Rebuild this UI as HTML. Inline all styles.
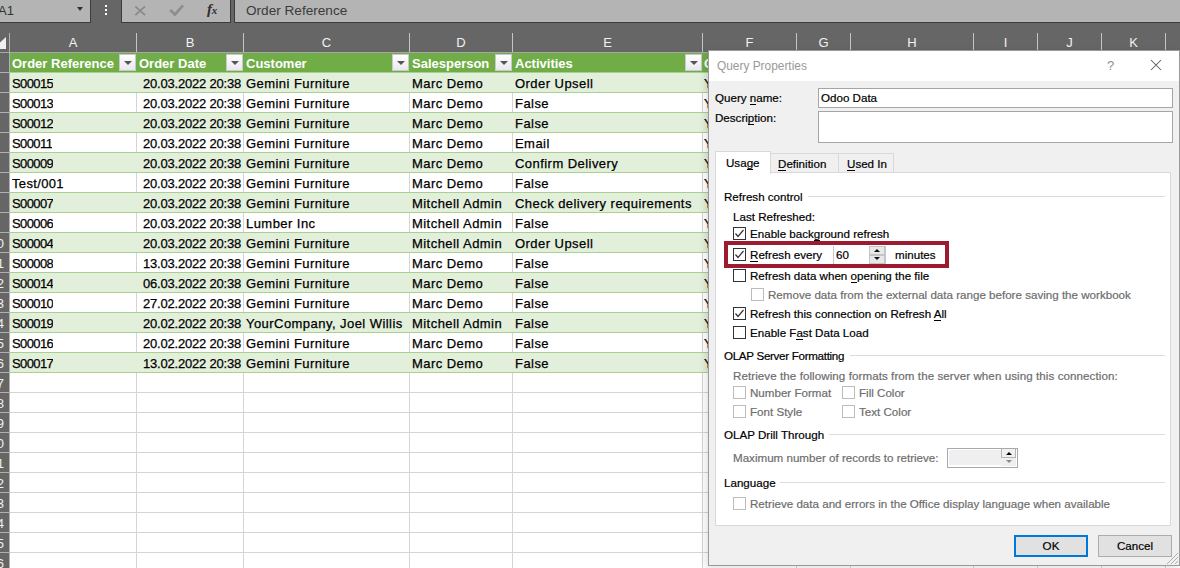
<!DOCTYPE html><html><head><meta charset="utf-8"><style>
*{margin:0;padding:0;box-sizing:border-box}
html,body{width:1180px;height:568px;overflow:hidden;background:#fff;font-family:"Liberation Sans",sans-serif}
.a{position:absolute}
#top{left:0;top:0;width:1180px;height:53px;background:#666}
.box{background:#b4b4b4;border-bottom:1px solid #3c3c3c}
.ch{color:#f2f2f2;font-size:13px;text-align:center;top:34px;height:18px;line-height:18px}
.cs{top:33px;width:1px;height:19px;background:#c4c4c4}
.rh{left:0;width:9px;background:#666}
.cell{font-size:13px;letter-spacing:0.45px;color:#000;-webkit-text-stroke:0.25px #000;white-space:nowrap;overflow:hidden}
.hd{font-size:13px;color:#fff;font-weight:bold;white-space:nowrap}
.fb{width:17px;height:17px;background:linear-gradient(#fff,#e8e8f0);border:1px solid #c9c9c9}
.fb:after{content:"";position:absolute;left:4px;top:6px;border-left:4px solid transparent;border-right:4px solid transparent;border-top:4px solid #555}
.dlg{left:708px;top:50px;width:472px;height:516px;background:#f0f0f0;border:1px solid #9a9a9a;box-shadow:-2px 2px 7px rgba(0,0,0,0.13)}
.t{font-size:11.6px;color:#000;white-space:nowrap;-webkit-text-stroke:0.2px currentColor}
.g{color:#6d6d6d}
.cb{width:13px;height:13px;border:1px solid #333;background:#fff}
.cbd{border-color:#bcbcbc}
.ln{height:1px;background:#dcdcdc}
u{text-decoration:none;border-bottom:1px solid #000}
</style></head><body>

<div class="a" id="top"></div>
<div class="a box" style="left:0;top:0;width:91px;height:23px;border-right:1px solid #3c3c3c"></div>
<div class="a" style="left:-2px;top:3px;font-size:13px;color:#333">A1</div>
<div class="a" style="left:77px;top:7px;border-left:3.5px solid transparent;border-right:3.5px solid transparent;border-top:4px solid #333"></div>
<div class="a" style="left:105px;top:5px;width:2px;height:2px;background:#fff"></div>
<div class="a" style="left:105px;top:9px;width:2px;height:2px;background:#fff"></div>
<div class="a" style="left:105px;top:13px;width:2px;height:2px;background:#fff"></div>
<div class="a box" style="left:121px;top:0;width:110px;height:23px;border-left:1px solid #3c3c3c;border-right:1px solid #3c3c3c"></div>
<svg class="a" style="left:133px;top:4px" width="14" height="14"><path d="M2.3 2.3L12 11.2M12 2.3L2.3 11.2" stroke="#8a8a8a" stroke-width="1.8"/></svg>
<svg class="a" style="left:168px;top:3px" width="17" height="15"><path d="M2.2 7L7 11.5L15 2.3" stroke="#8e8e8e" stroke-width="2.7" fill="none"/></svg>
<div class="a" style="left:207px;top:1px;font-family:'Liberation Serif',serif;font-style:italic;font-weight:bold;font-size:15px;color:#2e2e2e;letter-spacing:-0.3px">f<span style="font-size:11px">x</span></div>
<div class="a box" style="left:234px;top:0;width:946px;height:23px;border-left:1px solid #3c3c3c"></div>
<div class="a" style="left:246px;top:3px;font-size:13.6px;color:#3b3b3b">Order Reference</div>
<svg class="a" style="left:0;top:33px" width="9" height="18"><path d="M-7 16L6 16L6 4Z" fill="#f0f0f0"/></svg>
<div class="a ch" style="left:10px;width:126px">A</div>
<div class="a cs" style="left:136px"></div>
<div class="a ch" style="left:137px;width:106px">B</div>
<div class="a cs" style="left:243px"></div>
<div class="a ch" style="left:244px;width:165px">C</div>
<div class="a cs" style="left:409px"></div>
<div class="a ch" style="left:410px;width:102px">D</div>
<div class="a cs" style="left:512px"></div>
<div class="a ch" style="left:513px;width:189px">E</div>
<div class="a cs" style="left:702px"></div>
<div class="a ch" style="left:703px;width:93px">F</div>
<div class="a cs" style="left:796px"></div>
<div class="a ch" style="left:797px;width:53px">G</div>
<div class="a cs" style="left:850px"></div>
<div class="a ch" style="left:851px;width:122px">H</div>
<div class="a cs" style="left:973px"></div>
<div class="a ch" style="left:974px;width:63px">I</div>
<div class="a cs" style="left:1037px"></div>
<div class="a ch" style="left:1038px;width:63px">J</div>
<div class="a cs" style="left:1101px"></div>
<div class="a ch" style="left:1102px;width:63px">K</div>
<div class="a cs" style="left:1165px"></div>
<div class="a ch" style="left:1166px;width:63px">L</div>
<div class="a cs" style="left:1229px"></div>
<div class="a" style="left:0;top:52px;width:1180px;height:1px;background:#a8a8ac"></div>
<div class="a rh" style="top:53px;height:515px"></div>
<div class="a" style="left:9px;top:33px;width:1px;height:535px;background:#b0b0b0"></div>
<div class="a" style="left:0;top:72px;width:9px;height:1px;background:#b0b0b0"></div>
<div class="a" style="left:0;top:92px;width:9px;height:1px;background:#b0b0b0"></div>
<div class="a" style="left:0;top:112px;width:9px;height:1px;background:#b0b0b0"></div>
<div class="a" style="left:0;top:132px;width:9px;height:1px;background:#b0b0b0"></div>
<div class="a" style="left:0;top:152px;width:9px;height:1px;background:#b0b0b0"></div>
<div class="a" style="left:0;top:172px;width:9px;height:1px;background:#b0b0b0"></div>
<div class="a" style="left:0;top:192px;width:9px;height:1px;background:#b0b0b0"></div>
<div class="a" style="left:0;top:212px;width:9px;height:1px;background:#b0b0b0"></div>
<div class="a" style="left:0;top:232px;width:9px;height:1px;background:#b0b0b0"></div>
<div class="a" style="left:0;top:252px;width:9px;height:1px;background:#b0b0b0"></div>
<div class="a" style="left:-8px;top:236px;font-size:13px;color:#f0f0f0;width:12px;text-align:right">0</div>
<div class="a" style="left:0;top:272px;width:9px;height:1px;background:#b0b0b0"></div>
<div class="a" style="left:-8px;top:256px;font-size:13px;color:#f0f0f0;width:12px;text-align:right">1</div>
<div class="a" style="left:0;top:292px;width:9px;height:1px;background:#b0b0b0"></div>
<div class="a" style="left:-8px;top:276px;font-size:13px;color:#f0f0f0;width:12px;text-align:right">2</div>
<div class="a" style="left:0;top:312px;width:9px;height:1px;background:#b0b0b0"></div>
<div class="a" style="left:-8px;top:296px;font-size:13px;color:#f0f0f0;width:12px;text-align:right">3</div>
<div class="a" style="left:0;top:332px;width:9px;height:1px;background:#b0b0b0"></div>
<div class="a" style="left:-8px;top:316px;font-size:13px;color:#f0f0f0;width:12px;text-align:right">4</div>
<div class="a" style="left:0;top:352px;width:9px;height:1px;background:#b0b0b0"></div>
<div class="a" style="left:-8px;top:336px;font-size:13px;color:#f0f0f0;width:12px;text-align:right">5</div>
<div class="a" style="left:0;top:372px;width:9px;height:1px;background:#b0b0b0"></div>
<div class="a" style="left:-8px;top:356px;font-size:13px;color:#f0f0f0;width:12px;text-align:right">6</div>
<div class="a" style="left:0;top:392px;width:9px;height:1px;background:#b0b0b0"></div>
<div class="a" style="left:-8px;top:376px;font-size:13px;color:#f0f0f0;width:12px;text-align:right">7</div>
<div class="a" style="left:0;top:412px;width:9px;height:1px;background:#b0b0b0"></div>
<div class="a" style="left:-8px;top:396px;font-size:13px;color:#f0f0f0;width:12px;text-align:right">8</div>
<div class="a" style="left:0;top:432px;width:9px;height:1px;background:#b0b0b0"></div>
<div class="a" style="left:-8px;top:416px;font-size:13px;color:#f0f0f0;width:12px;text-align:right">9</div>
<div class="a" style="left:0;top:452px;width:9px;height:1px;background:#b0b0b0"></div>
<div class="a" style="left:-8px;top:436px;font-size:13px;color:#f0f0f0;width:12px;text-align:right">0</div>
<div class="a" style="left:0;top:472px;width:9px;height:1px;background:#b0b0b0"></div>
<div class="a" style="left:-8px;top:456px;font-size:13px;color:#f0f0f0;width:12px;text-align:right">1</div>
<div class="a" style="left:0;top:492px;width:9px;height:1px;background:#b0b0b0"></div>
<div class="a" style="left:-8px;top:476px;font-size:13px;color:#f0f0f0;width:12px;text-align:right">2</div>
<div class="a" style="left:0;top:512px;width:9px;height:1px;background:#b0b0b0"></div>
<div class="a" style="left:-8px;top:496px;font-size:13px;color:#f0f0f0;width:12px;text-align:right">3</div>
<div class="a" style="left:0;top:532px;width:9px;height:1px;background:#b0b0b0"></div>
<div class="a" style="left:-8px;top:516px;font-size:13px;color:#f0f0f0;width:12px;text-align:right">4</div>
<div class="a" style="left:0;top:552px;width:9px;height:1px;background:#b0b0b0"></div>
<div class="a" style="left:-8px;top:536px;font-size:13px;color:#f0f0f0;width:12px;text-align:right">5</div>
<div class="a" style="left:0;top:572px;width:9px;height:1px;background:#b0b0b0"></div>
<div class="a" style="left:-8px;top:556px;font-size:13px;color:#f0f0f0;width:12px;text-align:right">6</div>
<div class="a" style="left:136px;top:53px;width:1px;height:515px;background:#d4d4d4"></div>
<div class="a" style="left:243px;top:53px;width:1px;height:515px;background:#d4d4d4"></div>
<div class="a" style="left:409px;top:53px;width:1px;height:515px;background:#d4d4d4"></div>
<div class="a" style="left:512px;top:53px;width:1px;height:515px;background:#d4d4d4"></div>
<div class="a" style="left:702px;top:53px;width:1px;height:515px;background:#d4d4d4"></div>
<div class="a" style="left:796px;top:53px;width:1px;height:515px;background:#d4d4d4"></div>
<div class="a" style="left:850px;top:53px;width:1px;height:515px;background:#d4d4d4"></div>
<div class="a" style="left:973px;top:53px;width:1px;height:515px;background:#d4d4d4"></div>
<div class="a" style="left:1037px;top:53px;width:1px;height:515px;background:#d4d4d4"></div>
<div class="a" style="left:1101px;top:53px;width:1px;height:515px;background:#d4d4d4"></div>
<div class="a" style="left:1165px;top:53px;width:1px;height:515px;background:#d4d4d4"></div>
<div class="a" style="left:1229px;top:53px;width:1px;height:515px;background:#d4d4d4"></div>
<div class="a" style="left:10px;top:72px;width:1170px;height:1px;background:#d4d4d4"></div>
<div class="a" style="left:10px;top:92px;width:1170px;height:1px;background:#d4d4d4"></div>
<div class="a" style="left:10px;top:112px;width:1170px;height:1px;background:#d4d4d4"></div>
<div class="a" style="left:10px;top:132px;width:1170px;height:1px;background:#d4d4d4"></div>
<div class="a" style="left:10px;top:152px;width:1170px;height:1px;background:#d4d4d4"></div>
<div class="a" style="left:10px;top:172px;width:1170px;height:1px;background:#d4d4d4"></div>
<div class="a" style="left:10px;top:192px;width:1170px;height:1px;background:#d4d4d4"></div>
<div class="a" style="left:10px;top:212px;width:1170px;height:1px;background:#d4d4d4"></div>
<div class="a" style="left:10px;top:232px;width:1170px;height:1px;background:#d4d4d4"></div>
<div class="a" style="left:10px;top:252px;width:1170px;height:1px;background:#d4d4d4"></div>
<div class="a" style="left:10px;top:272px;width:1170px;height:1px;background:#d4d4d4"></div>
<div class="a" style="left:10px;top:292px;width:1170px;height:1px;background:#d4d4d4"></div>
<div class="a" style="left:10px;top:312px;width:1170px;height:1px;background:#d4d4d4"></div>
<div class="a" style="left:10px;top:332px;width:1170px;height:1px;background:#d4d4d4"></div>
<div class="a" style="left:10px;top:352px;width:1170px;height:1px;background:#d4d4d4"></div>
<div class="a" style="left:10px;top:372px;width:1170px;height:1px;background:#d4d4d4"></div>
<div class="a" style="left:10px;top:392px;width:1170px;height:1px;background:#d4d4d4"></div>
<div class="a" style="left:10px;top:412px;width:1170px;height:1px;background:#d4d4d4"></div>
<div class="a" style="left:10px;top:432px;width:1170px;height:1px;background:#d4d4d4"></div>
<div class="a" style="left:10px;top:452px;width:1170px;height:1px;background:#d4d4d4"></div>
<div class="a" style="left:10px;top:472px;width:1170px;height:1px;background:#d4d4d4"></div>
<div class="a" style="left:10px;top:492px;width:1170px;height:1px;background:#d4d4d4"></div>
<div class="a" style="left:10px;top:512px;width:1170px;height:1px;background:#d4d4d4"></div>
<div class="a" style="left:10px;top:532px;width:1170px;height:1px;background:#d4d4d4"></div>
<div class="a" style="left:10px;top:552px;width:1170px;height:1px;background:#d4d4d4"></div>
<div class="a" style="left:10px;top:572px;width:1170px;height:1px;background:#d4d4d4"></div>
<div class="a" style="left:10px;top:53px;width:700px;height:20px;background:#70ad47"></div>
<div class="a" style="left:10px;top:73px;width:700px;height:19px;background:#e2efda"></div>
<div class="a" style="left:10px;top:92px;width:700px;height:1px;background:#a9d08e"></div>
<div class="a" style="left:10px;top:112px;width:700px;height:1px;background:#a9d08e"></div>
<div class="a" style="left:10px;top:113px;width:700px;height:19px;background:#e2efda"></div>
<div class="a" style="left:10px;top:132px;width:700px;height:1px;background:#a9d08e"></div>
<div class="a" style="left:10px;top:152px;width:700px;height:1px;background:#a9d08e"></div>
<div class="a" style="left:10px;top:153px;width:700px;height:19px;background:#e2efda"></div>
<div class="a" style="left:10px;top:172px;width:700px;height:1px;background:#a9d08e"></div>
<div class="a" style="left:10px;top:192px;width:700px;height:1px;background:#a9d08e"></div>
<div class="a" style="left:10px;top:193px;width:700px;height:19px;background:#e2efda"></div>
<div class="a" style="left:10px;top:212px;width:700px;height:1px;background:#a9d08e"></div>
<div class="a" style="left:10px;top:232px;width:700px;height:1px;background:#a9d08e"></div>
<div class="a" style="left:10px;top:233px;width:700px;height:19px;background:#e2efda"></div>
<div class="a" style="left:10px;top:252px;width:700px;height:1px;background:#a9d08e"></div>
<div class="a" style="left:10px;top:272px;width:700px;height:1px;background:#a9d08e"></div>
<div class="a" style="left:10px;top:273px;width:700px;height:19px;background:#e2efda"></div>
<div class="a" style="left:10px;top:292px;width:700px;height:1px;background:#a9d08e"></div>
<div class="a" style="left:10px;top:312px;width:700px;height:1px;background:#a9d08e"></div>
<div class="a" style="left:10px;top:313px;width:700px;height:19px;background:#e2efda"></div>
<div class="a" style="left:10px;top:332px;width:700px;height:1px;background:#a9d08e"></div>
<div class="a" style="left:10px;top:352px;width:700px;height:1px;background:#a9d08e"></div>
<div class="a" style="left:10px;top:353px;width:700px;height:19px;background:#e2efda"></div>
<div class="a" style="left:10px;top:372px;width:700px;height:1px;background:#a9d08e"></div>
<div class="a" style="left:10px;top:72px;width:700px;height:1px;background:#a9d08e"></div>
<div class="a hd" style="left:12px;top:56px">Order Reference</div>
<div class="a hd" style="left:139px;top:56px">Order Date</div>
<div class="a hd" style="left:246px;top:56px">Customer</div>
<div class="a hd" style="left:412px;top:56px">Salesperson</div>
<div class="a hd" style="left:515px;top:56px">Activities</div>
<div class="a hd" style="left:704px;top:56px">C</div>
<div class="a fb" style="left:119px;top:54px"></div>
<div class="a fb" style="left:226px;top:54px"></div>
<div class="a fb" style="left:392px;top:54px"></div>
<div class="a fb" style="left:495px;top:54px"></div>
<div class="a fb" style="left:685px;top:54px"></div>
<div class="a cell" style="left:12px;top:76px;letter-spacing:-0.6px">S00015</div>
<div class="a cell" style="left:137px;width:106px;text-align:right;padding-right:2px;letter-spacing:-0.2px;top:76px">20.03.2022 20:38</div>
<div class="a cell" style="left:246px;top:76px">Gemini Furniture</div>
<div class="a cell" style="left:412px;top:76px">Marc Demo</div>
<div class="a cell" style="left:515px;top:76px">Order Upsell</div>
<div class="a cell" style="left:704px;top:76px">Y</div>
<div class="a cell" style="left:12px;top:96px;letter-spacing:-0.6px">S00013</div>
<div class="a cell" style="left:137px;width:106px;text-align:right;padding-right:2px;letter-spacing:-0.2px;top:96px">20.03.2022 20:38</div>
<div class="a cell" style="left:246px;top:96px">Gemini Furniture</div>
<div class="a cell" style="left:412px;top:96px">Marc Demo</div>
<div class="a cell" style="left:515px;top:96px">False</div>
<div class="a cell" style="left:704px;top:96px">Y</div>
<div class="a cell" style="left:12px;top:116px;letter-spacing:-0.6px">S00012</div>
<div class="a cell" style="left:137px;width:106px;text-align:right;padding-right:2px;letter-spacing:-0.2px;top:116px">20.03.2022 20:38</div>
<div class="a cell" style="left:246px;top:116px">Gemini Furniture</div>
<div class="a cell" style="left:412px;top:116px">Marc Demo</div>
<div class="a cell" style="left:515px;top:116px">False</div>
<div class="a cell" style="left:704px;top:116px">Y</div>
<div class="a cell" style="left:12px;top:136px;letter-spacing:-0.6px">S00011</div>
<div class="a cell" style="left:137px;width:106px;text-align:right;padding-right:2px;letter-spacing:-0.2px;top:136px">20.03.2022 20:38</div>
<div class="a cell" style="left:246px;top:136px">Gemini Furniture</div>
<div class="a cell" style="left:412px;top:136px">Marc Demo</div>
<div class="a cell" style="left:515px;top:136px">Email</div>
<div class="a cell" style="left:704px;top:136px">Y</div>
<div class="a cell" style="left:12px;top:156px;letter-spacing:-0.6px">S00009</div>
<div class="a cell" style="left:137px;width:106px;text-align:right;padding-right:2px;letter-spacing:-0.2px;top:156px">20.03.2022 20:38</div>
<div class="a cell" style="left:246px;top:156px">Gemini Furniture</div>
<div class="a cell" style="left:412px;top:156px">Marc Demo</div>
<div class="a cell" style="left:515px;top:156px">Confirm Delivery</div>
<div class="a cell" style="left:704px;top:156px">Y</div>
<div class="a cell" style="left:12px;top:176px;letter-spacing:0.35px">Test/001</div>
<div class="a cell" style="left:137px;width:106px;text-align:right;padding-right:2px;letter-spacing:-0.2px;top:176px">20.03.2022 20:38</div>
<div class="a cell" style="left:246px;top:176px">Gemini Furniture</div>
<div class="a cell" style="left:412px;top:176px">Marc Demo</div>
<div class="a cell" style="left:515px;top:176px">False</div>
<div class="a cell" style="left:704px;top:176px">Y</div>
<div class="a cell" style="left:12px;top:196px;letter-spacing:-0.6px">S00007</div>
<div class="a cell" style="left:137px;width:106px;text-align:right;padding-right:2px;letter-spacing:-0.2px;top:196px">20.03.2022 20:38</div>
<div class="a cell" style="left:246px;top:196px">Gemini Furniture</div>
<div class="a cell" style="left:412px;top:196px">Mitchell Admin</div>
<div class="a cell" style="left:515px;top:196px">Check delivery requirements</div>
<div class="a cell" style="left:704px;top:196px">Y</div>
<div class="a cell" style="left:12px;top:216px;letter-spacing:-0.6px">S00006</div>
<div class="a cell" style="left:137px;width:106px;text-align:right;padding-right:2px;letter-spacing:-0.2px;top:216px">20.03.2022 20:38</div>
<div class="a cell" style="left:246px;top:216px">Lumber Inc</div>
<div class="a cell" style="left:412px;top:216px">Mitchell Admin</div>
<div class="a cell" style="left:515px;top:216px">False</div>
<div class="a cell" style="left:704px;top:216px">Y</div>
<div class="a cell" style="left:12px;top:236px;letter-spacing:-0.6px">S00004</div>
<div class="a cell" style="left:137px;width:106px;text-align:right;padding-right:2px;letter-spacing:-0.2px;top:236px">20.03.2022 20:38</div>
<div class="a cell" style="left:246px;top:236px">Gemini Furniture</div>
<div class="a cell" style="left:412px;top:236px">Mitchell Admin</div>
<div class="a cell" style="left:515px;top:236px">Order Upsell</div>
<div class="a cell" style="left:704px;top:236px">Y</div>
<div class="a cell" style="left:12px;top:256px;letter-spacing:-0.6px">S00008</div>
<div class="a cell" style="left:137px;width:106px;text-align:right;padding-right:2px;letter-spacing:-0.2px;top:256px">13.03.2022 20:38</div>
<div class="a cell" style="left:246px;top:256px">Gemini Furniture</div>
<div class="a cell" style="left:412px;top:256px">Marc Demo</div>
<div class="a cell" style="left:515px;top:256px">False</div>
<div class="a cell" style="left:704px;top:256px">Y</div>
<div class="a cell" style="left:12px;top:276px;letter-spacing:-0.6px">S00014</div>
<div class="a cell" style="left:137px;width:106px;text-align:right;padding-right:2px;letter-spacing:-0.2px;top:276px">06.03.2022 20:38</div>
<div class="a cell" style="left:246px;top:276px">Gemini Furniture</div>
<div class="a cell" style="left:412px;top:276px">Marc Demo</div>
<div class="a cell" style="left:515px;top:276px">False</div>
<div class="a cell" style="left:704px;top:276px">Y</div>
<div class="a cell" style="left:12px;top:296px;letter-spacing:-0.6px">S00010</div>
<div class="a cell" style="left:137px;width:106px;text-align:right;padding-right:2px;letter-spacing:-0.2px;top:296px">27.02.2022 20:38</div>
<div class="a cell" style="left:246px;top:296px">Gemini Furniture</div>
<div class="a cell" style="left:412px;top:296px">Marc Demo</div>
<div class="a cell" style="left:515px;top:296px">False</div>
<div class="a cell" style="left:704px;top:296px">Y</div>
<div class="a cell" style="left:12px;top:316px;letter-spacing:-0.6px">S00019</div>
<div class="a cell" style="left:137px;width:106px;text-align:right;padding-right:2px;letter-spacing:-0.2px;top:316px">20.02.2022 20:38</div>
<div class="a cell" style="left:246px;top:316px">YourCompany, Joel Willis</div>
<div class="a cell" style="left:412px;top:316px">Mitchell Admin</div>
<div class="a cell" style="left:515px;top:316px">False</div>
<div class="a cell" style="left:704px;top:316px">Y</div>
<div class="a cell" style="left:12px;top:336px;letter-spacing:-0.6px">S00016</div>
<div class="a cell" style="left:137px;width:106px;text-align:right;padding-right:2px;letter-spacing:-0.2px;top:336px">20.02.2022 20:38</div>
<div class="a cell" style="left:246px;top:336px">Gemini Furniture</div>
<div class="a cell" style="left:412px;top:336px">Marc Demo</div>
<div class="a cell" style="left:515px;top:336px">False</div>
<div class="a cell" style="left:704px;top:336px">Y</div>
<div class="a cell" style="left:12px;top:356px;letter-spacing:-0.6px">S00017</div>
<div class="a cell" style="left:137px;width:106px;text-align:right;padding-right:2px;letter-spacing:-0.2px;top:356px">13.02.2022 20:38</div>
<div class="a cell" style="left:246px;top:356px">Gemini Furniture</div>
<div class="a cell" style="left:412px;top:356px">Marc Demo</div>
<div class="a cell" style="left:515px;top:356px">False</div>
<div class="a cell" style="left:704px;top:356px">Y</div>
<div class="a dlg"></div>
<div class="a" style="left:709px;top:51px;width:470px;height:30px;background:#fff"></div>
<div class="a" style="left:717px;top:59px;font-size:11.9px;color:#999">Query Properties</div>
<div class="a" style="left:1107px;top:58px;font-size:13px;color:#8f8f8f">?</div>
<svg class="a" style="left:1150px;top:59px" width="12" height="12"><path d="M1 1L11 11M11 1L1 11" stroke="#5a5a5a" stroke-width="1.05"/></svg>
<div class="a t" style="left:715px;top:91px">Query <u>n</u>ame:</div>
<div class="a" style="left:818px;top:88px;width:355px;height:20px;background:#fff;border:1px solid #a5a5a5"></div>
<div class="a t" style="left:821px;top:91px">Odoo Data</div>
<div class="a t" style="left:715px;top:111px">Descri<u>p</u>tion:</div>
<div class="a" style="left:818px;top:111px;width:355px;height:32px;background:#fff;border:1px solid #a5a5a5"></div>
<div class="a" style="left:715px;top:172px;width:456px;height:354px;background:#fff;border:1px solid #d9d9d9"></div>
<div class="a" style="left:770px;top:153px;width:69px;height:19px;background:#f0f0f0;border:1px solid #d9d9d9;border-bottom:none"></div>
<div class="a" style="left:838px;top:153px;width:56px;height:19px;background:#f0f0f0;border:1px solid #d9d9d9;border-bottom:none"></div>
<div class="a" style="left:715px;top:151px;width:56px;height:23px;background:#fff;border:1px solid #d9d9d9;border-bottom:none"></div>
<div class="a t" style="left:726px;top:156px">Usa<u>g</u>e</div>
<div class="a t" style="left:778px;top:157px"><u>D</u>efinition</div>
<div class="a t" style="left:847px;top:157px"><u>U</u>sed In</div>
<div class="a t" style="left:724px;top:190px;letter-spacing:0px">Refresh control</div>
<div class="a ln" style="left:808px;top:196px;width:357px"></div>
<div class="a t" style="left:733px;top:210px">Last Refreshed:</div>
<div class="a cb" style="left:733px;top:227px"></div>
<svg class="a" style="left:733px;top:227px" width="13" height="13"><path d="M2.5 6.5L5 9.5L10.5 3" stroke="#333" stroke-width="1.2" fill="none"/></svg>
<div class="a t" style="left:750px;top:227px">Enable back<u>g</u>round refresh</div>
<div class="a" style="left:724px;top:241px;width:225px;height:27px;border:4px solid #9e1a2f"></div>
<div class="a cb" style="left:733px;top:248px"></div>
<svg class="a" style="left:733px;top:248px" width="13" height="13"><path d="M2.5 6.5L5 9.5L10.5 3" stroke="#333" stroke-width="1.2" fill="none"/></svg>
<div class="a t" style="left:750px;top:248px"><u>R</u>efresh every</div>
<div class="a" style="left:833px;top:246px;width:53px;height:18px;background:#fff;border-left:1px solid #c8c8c8;border-right:1px solid #c8c8c8"></div>
<div class="a t" style="left:836px;top:248px">60</div>
<div class="a" style="left:869px;top:246px;width:16px;height:9px;background:#e8e8e8;border:1px solid #c4c4c4"></div>
<div class="a" style="left:869px;top:255px;width:16px;height:9px;background:#e8e8e8;border:1px solid #c4c4c4"></div>
<div class="a" style="left:873.5px;top:249px;border-left:3.5px solid transparent;border-right:3.5px solid transparent;border-bottom:3.5px solid #111"></div>
<div class="a" style="left:873.5px;top:256.5px;border-left:3.5px solid transparent;border-right:3.5px solid transparent;border-top:3.5px solid #111"></div>
<div class="a t" style="left:895px;top:248px">minutes</div>
<div class="a cb" style="left:733px;top:269px"></div>
<div class="a t" style="left:750px;top:269px">Refresh data when <u>o</u>pening the file</div>
<div class="a cb cbd" style="left:751px;top:288px"></div>
<div class="a t g" style="left:768px;top:288px">Remove data from the external data range before saving the workbook</div>
<div class="a cb" style="left:733px;top:307px"></div>
<svg class="a" style="left:733px;top:307px" width="13" height="13"><path d="M2.5 6.5L5 9.5L10.5 3" stroke="#333" stroke-width="1.2" fill="none"/></svg>
<div class="a t" style="left:750px;top:307px">Refresh this connection on Refresh <u>A</u>ll</div>
<div class="a cb" style="left:733px;top:326px"></div>
<div class="a t" style="left:750px;top:326px">Enable F<u>a</u>st Data Load</div>
<div class="a t" style="left:724px;top:349px;letter-spacing:-0.3px">OLAP Server Formatting</div>
<div class="a ln" style="left:850px;top:355px;width:315px"></div>
<div class="a t g" style="left:733px;top:369px;letter-spacing:0.07px">Retrieve the following formats from the server when using this connection:</div>
<div class="a cb cbd" style="left:733px;top:386px"></div>
<div class="a t g" style="left:750px;top:386px">Number Format</div>
<div class="a cb cbd" style="left:842px;top:386px"></div>
<div class="a t g" style="left:859px;top:386px">Fill Color</div>
<div class="a cb cbd" style="left:733px;top:405px"></div>
<div class="a t g" style="left:750px;top:405px">Font Style</div>
<div class="a cb cbd" style="left:842px;top:405px"></div>
<div class="a t g" style="left:859px;top:405px">Text Color</div>
<div class="a t" style="left:724px;top:428px;letter-spacing:0px">OLAP Drill Through</div>
<div class="a ln" style="left:829px;top:434px;width:336px"></div>
<div class="a t g" style="left:733px;top:451px">Maximum number of records to retrieve:</div>
<div class="a" style="left:947px;top:448px;width:71px;height:20px;background:#fff;border:1px solid #a8a8b0"></div>
<div class="a" style="left:949px;top:450px;width:52px;height:15px;background:#efefef"></div>
<div class="a" style="left:1001px;top:449px;width:15px;height:9px;background:#f0f0f0;border-left:1px solid #b4b4b4;border-right:1px solid #b4b4b4;border-bottom:1px solid #b4b4b4"></div>
<div class="a" style="left:1001px;top:458px;width:15px;height:8px;background:#efefef"></div>
<div class="a" style="left:1005.5px;top:452px;border-left:3px solid transparent;border-right:3px solid transparent;border-bottom:3px solid #000"></div>
<div class="a" style="left:1005.5px;top:460px;border-left:3px solid transparent;border-right:3px solid transparent;border-top:3px solid #8a8a8a"></div>
<div class="a t" style="left:724px;top:476px;letter-spacing:0px">Language</div>
<div class="a ln" style="left:780px;top:482px;width:385px"></div>
<div class="a cb cbd" style="left:733px;top:497px"></div>
<div class="a t g" style="left:750px;top:497px">Retrieve data and errors in the Office display language when available</div>
<div class="a" style="left:1014px;top:535px;width:74px;height:22px;background:#e1e1e1;border:2px solid #0078d7"></div>
<div class="a t" style="left:1014px;top:539px;width:74px;text-align:center">OK</div>
<div class="a" style="left:1098px;top:535px;width:74px;height:22px;background:#e1e1e1;border:1px solid #adadad"></div>
<div class="a t" style="left:1098px;top:539px;width:74px;text-align:center">Cancel</div>
<svg class="a" style="left:1166px;top:552px" width="13" height="13"><path d="M12 1L1 12M12 5L5 12M12 9L9 12" stroke="#b0b0b0" stroke-width="1"/></svg>
</body></html>
